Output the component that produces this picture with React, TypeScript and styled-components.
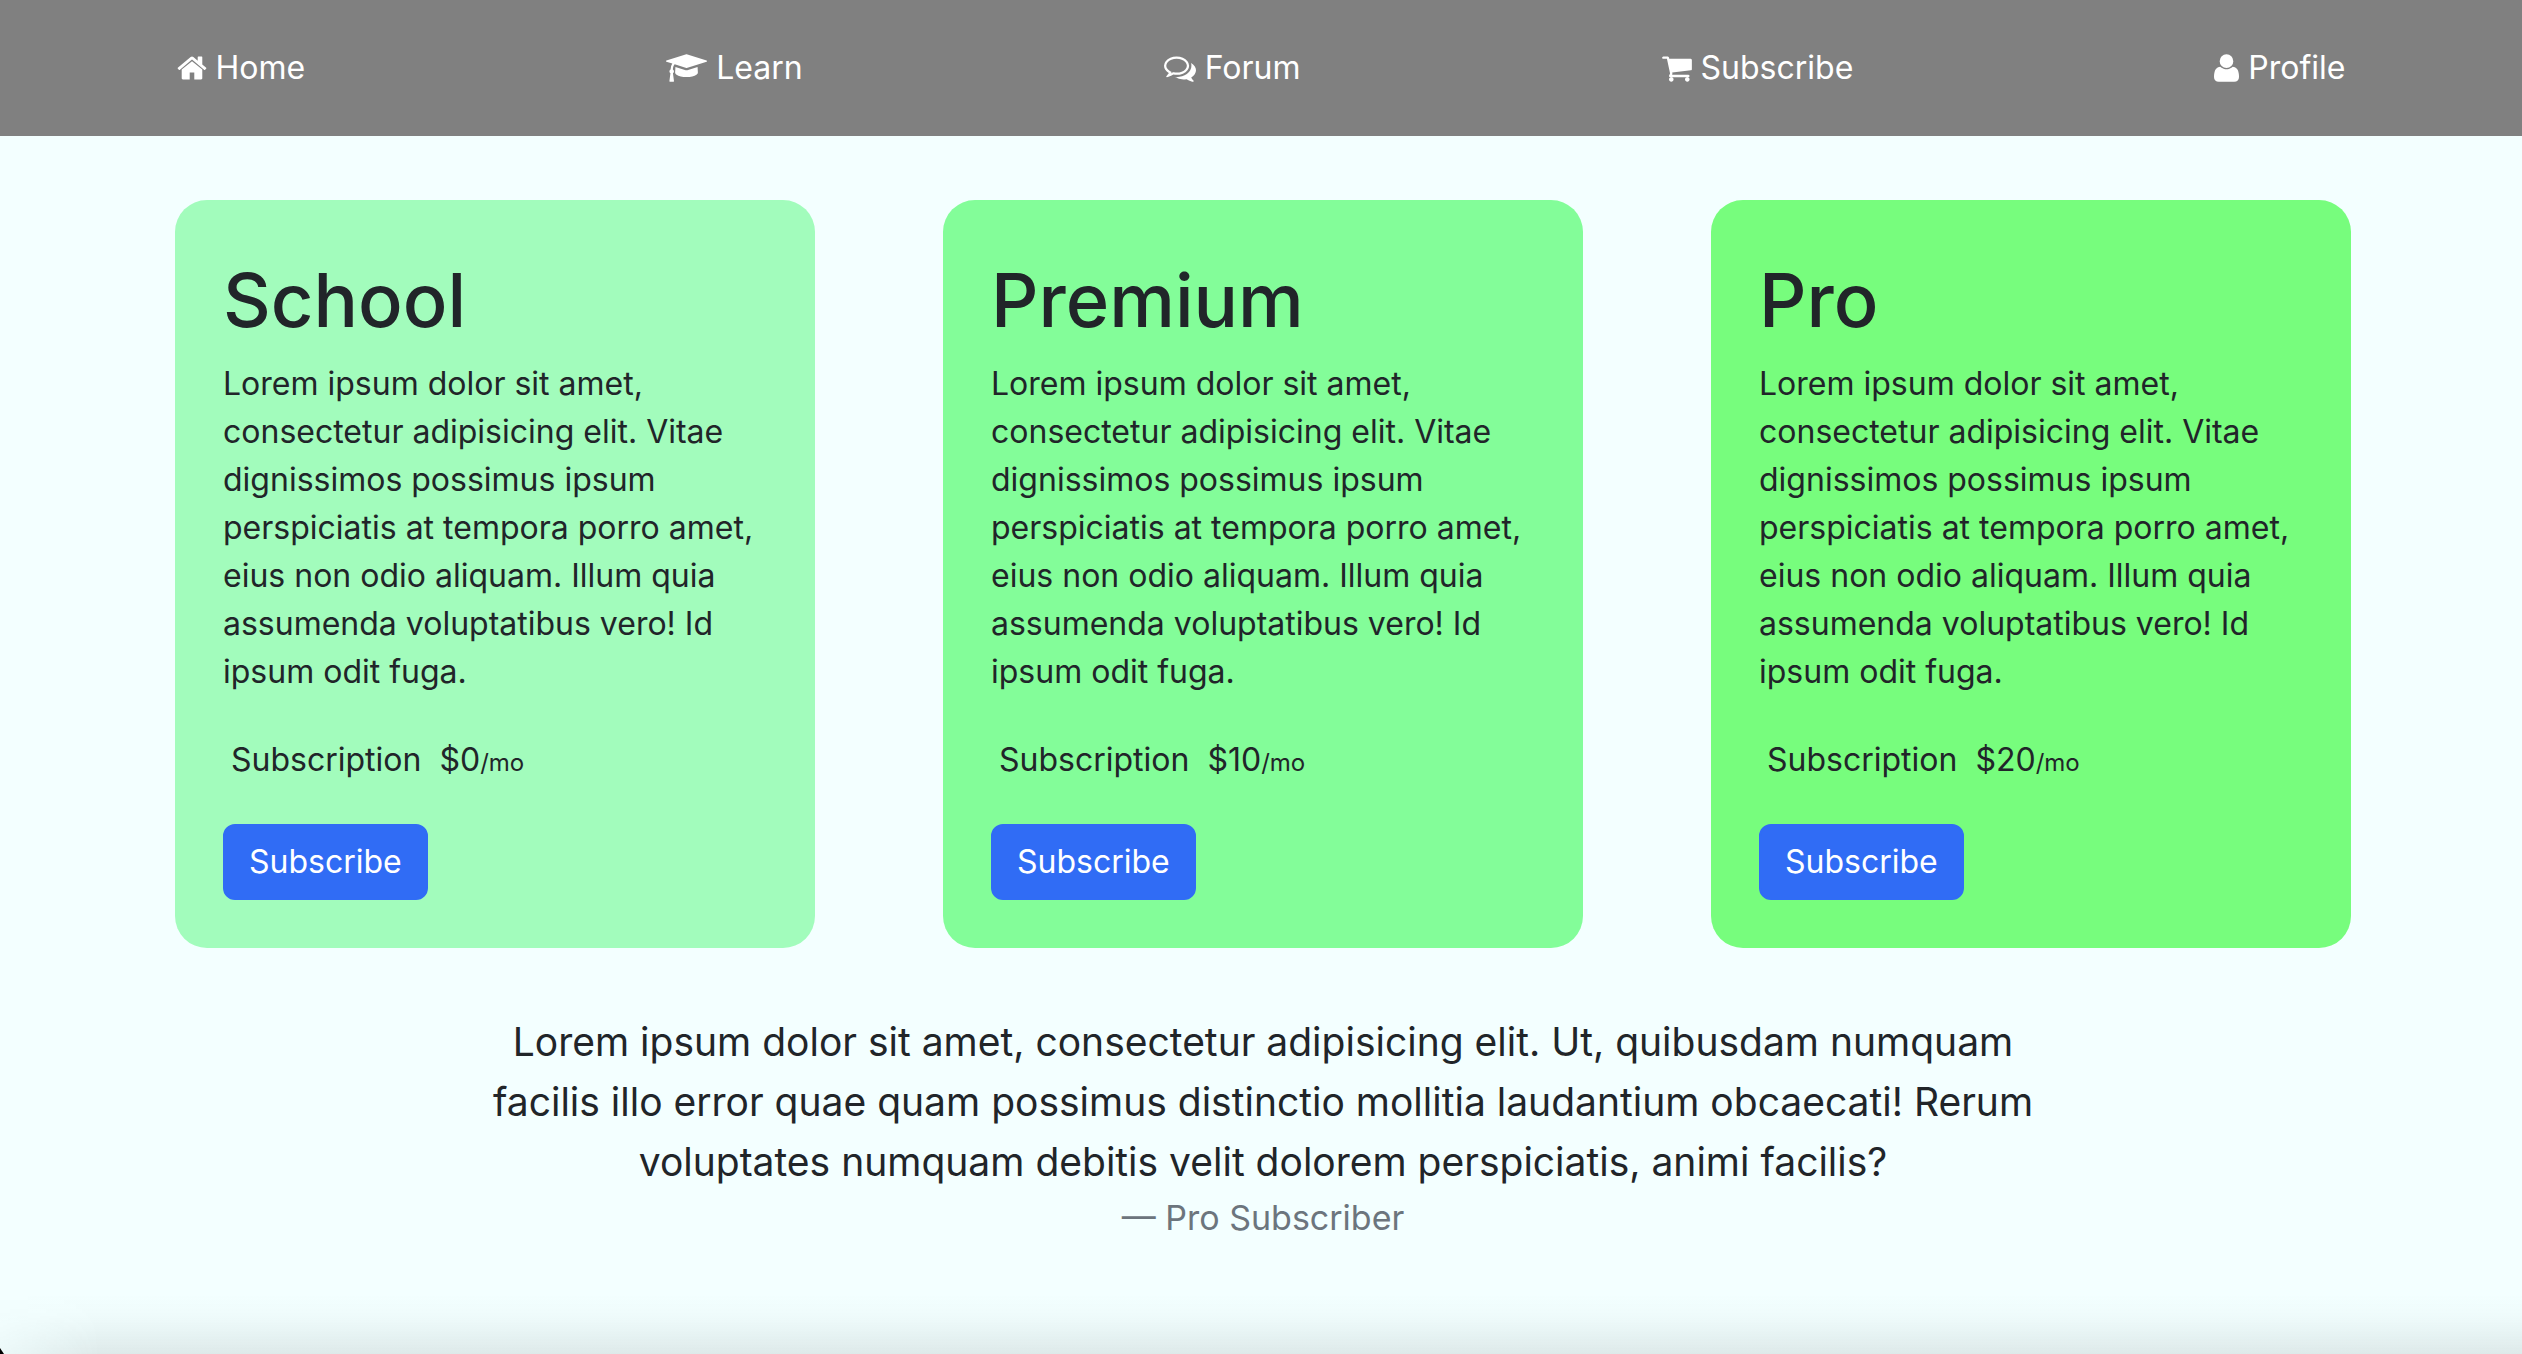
import React from 'react';
import styled, { createGlobalStyle } from 'styled-components';

const GlobalStyle = createGlobalStyle`
  *, *::before, *::after { box-sizing: border-box; }
  body {
    margin: 0;
    background: #f3ffff;
    color: #212529;
    font-family: Inter, Roboto, "Liberation Sans", sans-serif;
    font-size: 32px;
    line-height: 48px;
  }
  h1, p, blockquote, figure { margin: 0; }
`;

const Page = styled.div`
  position: relative;
  min-height: 100vh;
  overflow: hidden;
`;

const NavBar = styled.nav`
  display: flex;
  align-items: center;
  justify-content: space-between;
  padding: 44px 7%;
  background: #808080;
`;

const NavLink = styled.a`
  color: #ffffff;
  text-decoration: none;
  white-space: nowrap;
`;

const Icon = styled.svg`
  height: 32px;
  vertical-align: -5px;
  fill: currentColor;
`;

const Main = styled.main`
  padding: 64px 0 0 4px;
`;

const Plans = styled.section`
  display: flex;
  flex-wrap: wrap;
  justify-content: center;
  gap: 64px 128px;
`;

const Card = styled.article<{ $color: string }>`
  width: 640px;
  padding: 48px;
  border-radius: 32px;
  background: ${(p) => p.$color};
`;

const Title = styled.h1`
  margin-bottom: 8px;
  font-size: 74px;
  font-weight: 500;
  line-height: 104px;
`;

const Price = styled.p`
  padding: 40px 8px;
  line-height: 48px;
  white-space: pre;
`;

const Period = styled.small`
  font-size: 24px;
  line-height: 24px;
`;

const SubscribeButton = styled.button`
  display: block;
  padding: 12px 24px;
  border: 2px solid #306cf5;
  border-radius: 12px;
  background: #306cf5;
  color: #ffffff;
  font: inherit;
  cursor: pointer;
`;

const Quote = styled.figure`
  max-width: 1600px;
  margin: 64px auto 0;
  text-align: center;
`;

const QuoteText = styled.blockquote`
  font-size: 39px;
  line-height: 60px;
`;

const QuoteSource = styled.figcaption`
  color: #6c757d;
  font-size: 34px;
  line-height: 52px;
`;

const WindowShade = styled.div`
  position: absolute;
  inset: auto 0 0 0;
  height: 60px;
  background: linear-gradient(
    to bottom,
    rgba(50, 60, 60, 0),
    rgba(50, 60, 60, 0.02) 35%,
    rgba(50, 60, 60, 0.05) 60%,
    rgba(50, 60, 60, 0.11)
  );
  mask-image: linear-gradient(to right, rgba(0, 0, 0, 0.3), #000 100px);
`;

const WindowCorner = styled.div`
  position: absolute;
  bottom: 0;
  left: 0;
  width: 4px;
  height: 6px;
  background: #000000;
  clip-path: polygon(0 0, 100% 100%, 0 100%);
`;

type NavItem = { label: string; box: string; width: number; path: string; flip?: boolean };

const navItems: NavItem[] = [
  {
    label: 'Home',
    box: '64 0 1664 1792',
    width: 30,
    path: 'M1472 992v480q0 26-19 45t-45 19h-384v-384h-256v384h-384q-26 0-45-19t-19-45v-480q0-1 .5-3t.5-3l575-474 575 474q1 2 1 6zm223-69l-62 74q-8 9-21 11h-3q-13 0-21-7l-692-577-692 577q-12 8-24 7-13-2-21-11l-62-74q-8-10-7-23.5t11-21.5l719-599q32-26 76-26t76 26l244 204v-195q0-14 9-23t23-9h192q14 0 23 9t9 23v408l219 182q10 8 11 21.5t-7 23.5z',
  },
  {
    label: 'Learn',
    box: '0 0 2304 1792',
    width: 41,
    path: 'M1774 836l18 316q4 69-82 128t-235 93.5-323 34.5-323-34.5-235-93.5-82-128l18-316 574 181q22 7 48 7t48-7zm530-324q0 23-22 31l-1120 352q-4 1-10 1t-10-1l-652-206q-43 34-71 111.5t-34 178.5q63 36 63 109 0 69-58 107l58 433q2 14-8 25-9 11-24 11h-192q-15 0-24-11-10-11-8-25l58-433q-58-38-58-107 0-73 65-111 11-207 98-330l-333-104q-22-8-22-31t22-31l1120-352q4-1 10-1t10 1l1120 352q22 8 22 31z',
  },
  {
    label: 'Forum',
    box: '0 0 1792 1792',
    width: 32,
    path: 'M704 384q-153 0-286 52t-211.5 141-78.5 191q0 82 53 158t149 132l97 56-35 84q34-20 62-39l44-31 53 10q78 14 153 14 153 0 286-52t211.5-141 78.5-191-78.5-191-211.5-141-286-52zm0-128q191 0 353.5 68.5t256.5 186.5 94 257-94 257-256.5 186.5-353.5 68.5q-86 0-176-16-124 88-278 128-36 9-86 16h-3q-11 0-20.5-8t-11.5-21q-1-3-1-6.5t.5-6.5 2-6l2.5-5 3.5-5.5 4-5 4.5-5 4-4.5q5-6 23-25t26-29.5 22.5-29 25-38.5 20.5-44q-124-72-195-177t-71-224q0-139 94-257t256.5-186.5 353.5-68.5zm822 1169q10 24 20.5 44t25 38.5 22.5 29 26 29.5 23 25q1 1 4 4.5t4.5 5 4 5 3.5 5.5l2.5 5 2 6 .5 6.5-1 6.5q-3 14-13 22t-22 7q-50-7-86-16-154-40-278-128-90 16-176 16-271 0-472-132 58 4 88 4 161 0 309-45t264-129q125-92 192-212t67-254q0-77-23-152 129 71 204 178t75 230q0 120-71 224.5t-195 176.5z',
  },
  {
    label: 'Subscribe',
    box: '64 0 1664 1792',
    width: 30,
    path: 'M704 1536q0 52-38 90t-90 38-90-38-38-90 38-90 90-38 90 38 38 90zm896 0q0 52-38 90t-90 38-90-38-38-90 38-90 90-38 90 38 38 90zm128-1088v512q0 24-16.5 42.5t-40.5 21.5l-1044 122q13 60 13 70 0 16-24 64h920q26 0 45 19t19 45-19 45-45 19h-1024q-26 0-45-19t-19-45q0-11 8-31.5t16-36 21.5-40 15.5-29.5l-177-823h-204q-26 0-45-19t-19-45 19-45 45-19h256q16 0 28.5 6.5t19.5 15.5 13 24.5 8 26 5.5 29.5 4.5 26h1201q26 0 45 19t19 45z',
  },
  {
    label: 'Profile',
    box: '0 0 1408 1792',
    width: 25,
    flip: true,
    path: 'M1408 131q0 -120 -73 -189.5t-194 -69.5h-874q-121 0 -194 69.5t-73 189.5q0 53 3.5 103.5t14 109t26.5 108.5t43 97.5t62 81t85.5 53.5t111.5 20q9 0 42 -21.5t74.5 -48t108 -48t133.5 -21.5t133.5 21.5t108 48t74.5 48t42 21.5q61 0 111.5 -20t85.5 -53.5t62 -81t43 -97.5t26.5 -108.5t14 -109t3.5 -103.5zM1088 1024q0 -159 -112.5 -271.5t-271.5 -112.5t-271.5 112.5t-112.5 271.5t112.5 271.5t271.5 112.5t271.5 -112.5t112.5 -271.5z',
  },
];

const plans = [
  { name: 'School', price: '$0', color: '#a2fcbc' },
  { name: 'Premium', price: '$10', color: '#83fd99' },
  { name: 'Pro', price: '$20', color: '#77fd7d' },
];

export default function App() {
  return (
    <Page>
      <GlobalStyle />
      <NavBar aria-label="Main">
        {navItems.map((item) => (
          <NavLink key={item.label} href={`#${item.label.toLowerCase()}`}>
            <Icon viewBox={item.box} width={item.width} aria-hidden="true">
              <path d={item.path} transform={item.flip ? 'matrix(1 0 0 -1 0 1536)' : undefined} />
            </Icon>{' '}
            {item.label}
          </NavLink>
        ))}
      </NavBar>
      <Main>
        <Plans>
          {plans.map((plan) => (
            <Card key={plan.name} $color={plan.color}>
              <Title>{plan.name}</Title>
              <p>
                Lorem ipsum dolor sit amet, consectetur adipisicing elit. Vitae dignissimos possimus
                ipsum perspiciatis at tempora porro amet, eius non odio aliquam. Illum quia assumenda
                voluptatibus vero! Id ipsum odit fuga.
              </p>
              <Price>
                {`Subscription  ${plan.price}`}
                <Period>/mo</Period>
              </Price>
              <SubscribeButton type="button">Subscribe</SubscribeButton>
            </Card>
          ))}
        </Plans>
        <Quote>
          <QuoteText>
            Lorem ipsum dolor sit amet, consectetur adipisicing elit. Ut, quibusdam numquam facilis
            illo error quae quam possimus distinctio mollitia laudantium obcaecati! Rerum voluptates
            numquam debitis velit dolorem perspiciatis, animi facilis?
          </QuoteText>
          <QuoteSource>— Pro Subscriber</QuoteSource>
        </Quote>
      </Main>
      <WindowShade />
      <WindowCorner />
    </Page>
  );
}
